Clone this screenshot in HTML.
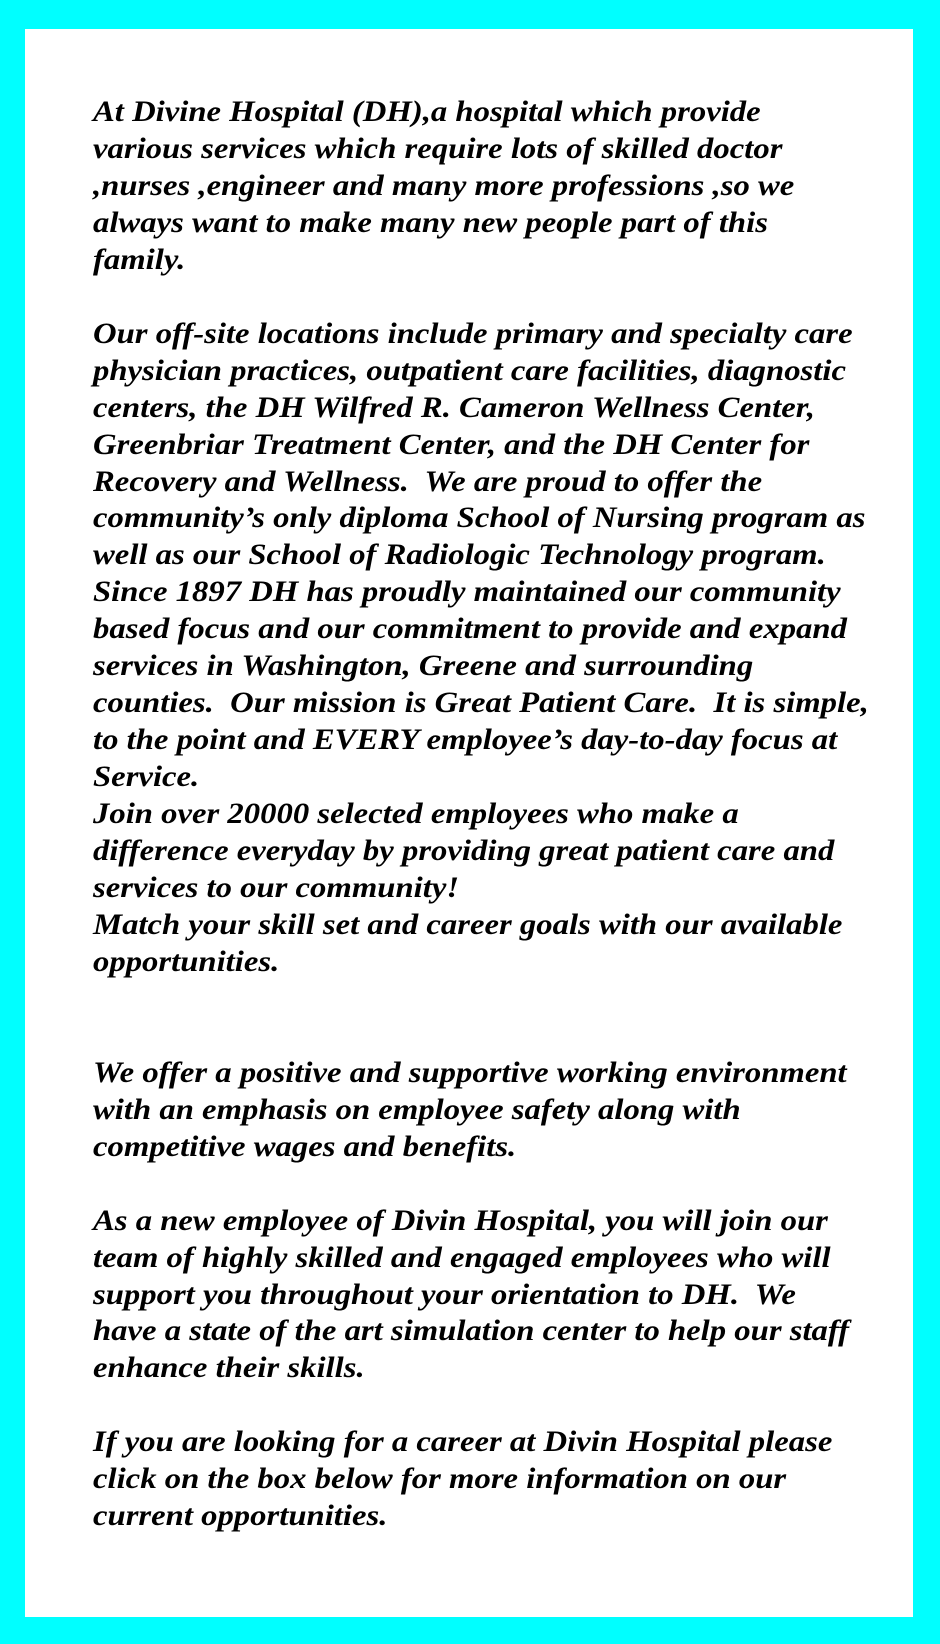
<!DOCTYPE html>
<html><head><meta charset="utf-8"><style>
html,body{margin:0;padding:0;}
body{width:940px;height:1644px;background:#00ffff;position:relative;overflow:hidden;}
.box{position:absolute;left:25px;top:29px;width:888px;height:1588px;background:#fff;}
.t{position:absolute;left:93px;top:94px;font-family:"Liberation Serif",serif;font-weight:bold;font-style:italic;font-size:30px;line-height:36.95px;white-space:nowrap;color:#000;transform:scaleX(1.09);transform-origin:0 0;}
</style></head><body>
<div class="box"></div>
<div class="t">At Divine Hospital (DH),a hospital which provide<br>
various services which require lots of skilled doctor<br>
,nurses ,engineer and many more professions ,so we<br>
always want to make many new people part of this<br>
family.<br>
<br>
Our off-site locations include primary and specialty care<br>
physician practices, outpatient care facilities, diagnostic<br>
centers, the DH Wilfred R. Cameron Wellness Center,<br>
Greenbriar Treatment Center, and the DH Center for<br>
Recovery and Wellness.&nbsp; We are proud to offer the<br>
community’s only diploma School of Nursing program as<br>
well as our School of Radiologic Technology program.<br>
Since 1897 DH has proudly maintained our community<br>
based focus and our commitment to provide and expand<br>
services in Washington, Greene and surrounding<br>
counties.&nbsp; Our mission is Great Patient Care.&nbsp; It is simple,<br>
to the point and EVERY employee’s day-to-day focus at<br>
Service.<br>
Join over 20000 selected employees who make a<br>
difference everyday by providing great patient care and<br>
services to our community!<br>
Match your skill set and career goals with our available<br>
opportunities.<br>
<br>
<br>
We offer a positive and supportive working environment<br>
with an emphasis on employee safety along with<br>
competitive wages and benefits.<br>
<br>
As a new employee of Divin Hospital, you will join our<br>
team of highly skilled and engaged employees who will<br>
support you throughout your orientation to DH.&nbsp; We<br>
have a state of the art simulation center to help our staff<br>
enhance their skills.<br>
<br>
If you are looking for a career at Divin Hospital please<br>
click on the box below for more information on our<br>
current opportunities.</div>
</body></html>
